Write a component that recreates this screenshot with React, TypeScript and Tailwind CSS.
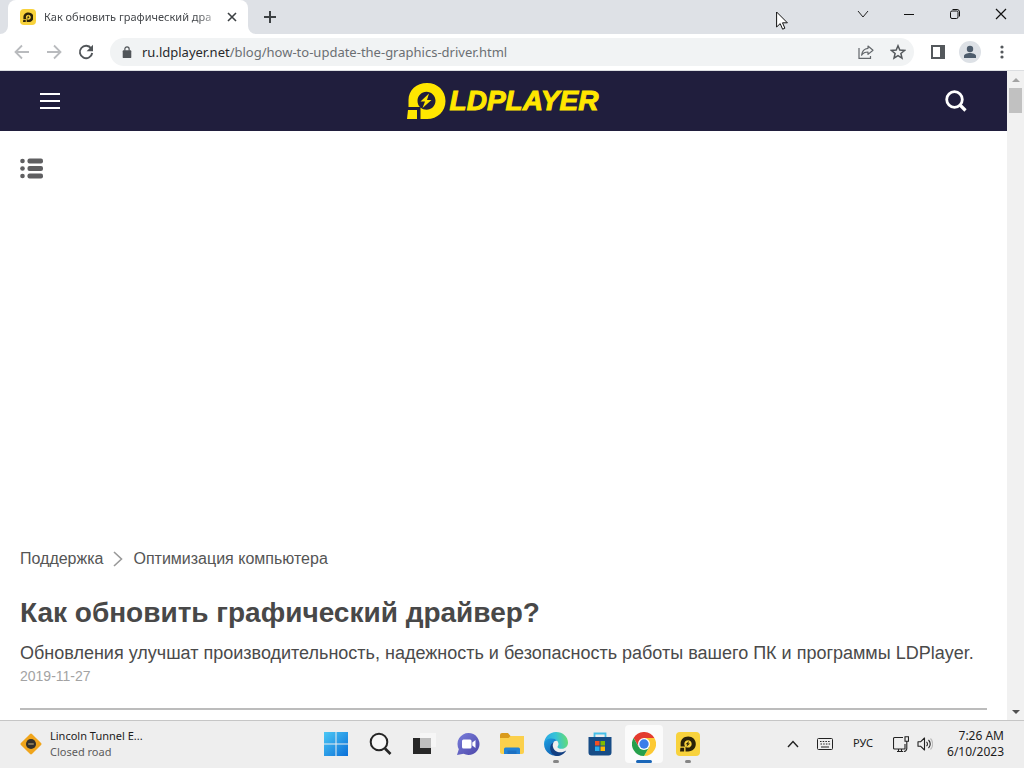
import type React from "react";
import { useState } from "react";

const PAGE_URL = {
  host: "ru.ldplayer.net",
  path: "/blog/how-to-update-the-graphics-driver.html",
};

const ARTICLE = {
  title: "Как обновить графический драйвер?",
  summary:
    "Обновления улучшат производительность, надежность и безопасность работы вашего ПК и программы LDPlayer.",
  date: "2019-11-27",
};

type IconButtonProps = {
  label: string;
  className?: string;
  children: React.ReactNode;
};

const IconButton: React.FC<IconButtonProps> = ({
  label,
  className = "",
  children,
}) => (
  <button
    type="button"
    aria-label={label}
    className={`flex shrink-0 items-center justify-center ${className}`}
  >
    {children}
  </button>
);

const LdMark: React.FC<{ className?: string }> = ({ className }) => (
  <svg viewBox="0 0 39 36" className={className} fill="currentColor" aria-hidden="true">
    <path
      fillRule="evenodd"
      d="M1.500 24V17C1.500 7 9.500 0 20 0c10.500 0 18.500 7.500 18.500 18s-8 18-18.500 18h-6.500V24.500c1.800 1.500 3.800 2.200 6 2.200 5 0 9-4 9-9s-4-9-9-9-9 4-9 9c0 2.400.8 4.600 2.400 6.300z"
    />
    <path d="M1 27h9v9H0z" />
    <path d="M22 10.500 13.500 18.500H18L15.500 25l9-8H20z" />
  </svg>
);

const LdAppIcon: React.FC<{ className?: string }> = ({ className }) => (
  <span
    className={`flex shrink-0 items-center justify-center bg-[#f8d23c] text-[#2a2108] ${className}`}
  >
    <LdMark className="h-2/3 w-2/3" />
  </span>
);

const TabStrip = () => (
  <div className="flex h-[34px] shrink-0 items-stretch bg-[#dee1e6] pl-2">
    <div className="relative flex w-60 items-center rounded-t-lg bg-white pl-3 pr-2">
      <svg viewBox="0 0 8 8" className="absolute -left-2 bottom-0 size-2" fill="#fff" aria-hidden="true">
        <path d="M8 0v8H0a8 8 0 0 0 8-8z" />
      </svg>
      <svg viewBox="0 0 8 8" className="absolute -right-2 bottom-0 size-2" fill="#fff" aria-hidden="true">
        <path d="M0 0v8h8a8 8 0 0 1-8-8z" />
      </svg>
      <LdAppIcon className="size-4 rounded-sm" />
      <span className="ml-2 min-w-0 flex-1 whitespace-nowrap text-[11px] text-[#45484c] [mask-image:linear-gradient(to_right,black_85%,transparent)]">
        Как обновить графический дра
      </span>
      <IconButton label="Закрыть вкладку" className="size-4">
        <svg viewBox="0 0 16 16" className="size-4" fill="none" stroke="#3c4043" strokeWidth="1.600" aria-hidden="true">
          <path d="M4 4l8 8M12 4l-8 8" />
        </svg>
      </IconButton>
    </div>
    <IconButton label="Новая вкладка" className="ml-2 w-7">
      <svg viewBox="0 0 14 14" className="size-3.5" fill="none" stroke="#3c4043" strokeWidth="2" aria-hidden="true">
        <path d="M7 1v12M1 7h12" />
      </svg>
    </IconButton>
    <div className="ml-auto flex h-7 items-stretch">
      <IconButton label="Поиск вкладок" className="w-[46px]">
        <svg viewBox="0 0 12 12" className="size-3" fill="none" stroke="#222" aria-hidden="true">
          <path d="M1 3l5 6 5-6" />
        </svg>
      </IconButton>
      <IconButton label="Свернуть" className="w-[46px]">
        <svg viewBox="0 0 12 12" className="size-3" fill="none" stroke="#111" aria-hidden="true">
          <path d="M1 6.500h10" />
        </svg>
      </IconButton>
      <IconButton label="Восстановить" className="w-[46px]">
        <svg viewBox="0 0 12 12" className="size-3" fill="none" stroke="#111" aria-hidden="true">
          <rect x="1.500" y="3" width="7.500" height="7.500" rx="1.500" />
          <path d="M3.500 1.500H8a2.500 2.500 0 0 1 2.500 2.500v4.500" />
        </svg>
      </IconButton>
      <IconButton label="Закрыть" className="w-[46px]">
        <svg viewBox="0 0 12 12" className="size-3" fill="none" stroke="#111" strokeWidth="1.200" aria-hidden="true">
          <path d="M1 1l10 10M11 1L1 11" />
        </svg>
      </IconButton>
    </div>
  </div>
);

const Toolbar = () => (
  <div className="flex h-[37px] shrink-0 items-center border-b border-[#dcdee1] bg-white px-1.5">
    <IconButton label="Назад" className="size-8">
      <svg viewBox="0 0 16 16" className="size-4" fill="none" stroke="#b9bbbe" strokeWidth="1.800" aria-hidden="true">
        <path d="M15 8H2M8 1.500L1.500 8 8 14.500" />
      </svg>
    </IconButton>
    <IconButton label="Вперёд" className="size-8">
      <svg viewBox="0 0 16 16" className="size-4" fill="none" stroke="#b9bbbe" strokeWidth="1.800" aria-hidden="true">
        <path d="M1 8h13M8 1.500L14.500 8 8 14.500" />
      </svg>
    </IconButton>
    <IconButton label="Обновить" className="size-8">
      <svg viewBox="0 0 16 16" className="size-4" aria-hidden="true">
        <path d="M13.200 4.500A6.200 6.200 0 1 0 14.200 9" fill="none" stroke="#515559" strokeWidth="1.900" />
        <path d="M15 .8v6.400H8.600z" fill="#515559" />
      </svg>
    </IconButton>
    <div className="mx-2 flex h-7 min-w-0 flex-1 items-center rounded-full bg-[#f1f3f4] pl-3">
      <svg viewBox="0 0 10 14" className="h-3 w-2.5 shrink-0" aria-hidden="true">
        <rect y="5" width="10" height="9" rx="1" fill="#515559" />
        <path d="M2.500 5.500V3.500a2.500 2.500 0 0 1 5 0v2" fill="none" stroke="#515559" strokeWidth="1.400" />
      </svg>
      <button type="button" aria-label="Адрес страницы" className="ml-2.5 min-w-0 flex-1 truncate text-left text-[13px] leading-5 text-[#6b6f73]">
        <span className="text-[#27292c]">{PAGE_URL.host}</span>
        {PAGE_URL.path}
      </button>
      <IconButton label="Поделиться" className="size-8">
        <svg viewBox="0 0 16 16" className="size-4" fill="none" stroke="#63676b" strokeWidth="1.200" aria-hidden="true">
          <path d="M1 4v10.400h11.500V12" />
          <path d="M10 2l5 4.200-5 4.200V8C7 8 5 9 3.600 11.200 4 7.500 6 4.700 10 4.300z" strokeLinejoin="round" />
        </svg>
      </IconButton>
      <IconButton label="Добавить в закладки" className="size-8">
        <svg viewBox="0 0 16 16" className="size-4" fill="none" stroke="#54585c" strokeWidth="1.500" aria-hidden="true">
          <path d="M8 1.800l1.800 4.300 4.700.4-3.600 3 1.100 4.600L8 11.700l-4 2.400 1.100-4.600-3.600-3 4.700-.4z" />
        </svg>
      </IconButton>
    </div>
    <IconButton label="Боковая панель" className="size-8">
      <svg viewBox="0 0 14 14" className="size-3.5" aria-hidden="true">
        <path d="M0 0h14v14H0zM2 2v10h7V2z" fill="#54585c" fillRule="evenodd" />
      </svg>
    </IconButton>
    <IconButton label="Профиль" className="size-8">
      <span className="flex size-[22px] items-center justify-center rounded-full bg-[#dde1e6]">
        <svg viewBox="0 0 14 14" className="size-3.5" fill="#4d5c6c" aria-hidden="true">
          <circle cx="7" cy="4" r="3.200" />
          <path d="M1 13v-2c0-2 3.500-3 6-3s6 1 6 3v2z" />
        </svg>
      </span>
    </IconButton>
    <IconButton label="Меню браузера" className="size-8">
      <svg viewBox="0 0 4 14" className="h-3.5 w-1" fill="#54585c" aria-hidden="true">
        <circle cx="2" cy="2" r="1.600" />
        <circle cx="2" cy="7" r="1.600" />
        <circle cx="2" cy="12" r="1.600" />
      </svg>
    </IconButton>
  </div>
);

const SiteHeader = () => (
  <header className="flex h-15 items-center justify-between bg-[#201e3d] px-10">
    <IconButton label="Меню">
      <svg viewBox="0 0 20 16" className="h-4 w-5" fill="#fff" aria-hidden="true">
        <path d="M0 0h20v2H0zM0 7h20v2H0zM0 14h20v2H0z" />
      </svg>
    </IconButton>
    <a href="#home" className="flex items-center gap-1 text-[#ffe600]">
      <LdMark className="h-9 w-[39px]" />
      <span className="text-[28px] font-bold italic leading-9 [-webkit-text-stroke:1px_#ffe600]">
        LDPLAYER
      </span>
    </a>
    <IconButton label="Поиск">
      <svg viewBox="0 0 22 22" className="size-[22px]" fill="none" stroke="#fff" aria-hidden="true">
        <circle cx="9.500" cy="9.500" r="7.800" strokeWidth="2.800" />
        <path d="M15 15l5.500 5.500" strokeWidth="3.200" />
      </svg>
    </IconButton>
  </header>
);

const Article = () => (
  <article className="px-5 pt-[26px]">
    <IconButton label="Содержание">
      <svg viewBox="0 0 23 22" className="h-[22px] w-[23px]" fill="#5f5f61" aria-hidden="true">
        <circle cx="2.500" cy="4" r="2.300" />
        <circle cx="2.500" cy="11.500" r="2.300" />
        <circle cx="2.500" cy="19" r="2.300" />
        <rect x="7.500" y="1.500" width="15.500" height="5" rx="2" />
        <rect x="7.500" y="9" width="15.500" height="5" rx="2" />
        <rect x="7.500" y="16.500" width="15.500" height="5" rx="2" />
      </svg>
    </IconButton>
    <div className="h-[368px]" />
    <nav className="flex items-center text-base text-[#555]">
      <a href="#support">Поддержка</a>
      <svg viewBox="0 0 10 16" className="mx-2.5 h-4 w-2.5" fill="none" stroke="#999" strokeWidth="1.600" aria-hidden="true">
        <path d="M1 1l7.500 7L1 15" />
      </svg>
      <a href="#optimization">Оптимизация компьютера</a>
    </nav>
    <h1 className="mt-6 text-[28px] font-bold leading-9 text-[#484848]">
      {ARTICLE.title}
    </h1>
    <p className="mt-2.5 text-lg leading-6 text-[#4a4a4a]">{ARTICLE.summary}</p>
    <time dateTime={ARTICLE.date} className="block text-sm leading-[22px] text-[#a3a3a3]">
      {ARTICLE.date}
    </time>
    <hr className="mt-[21px] border-t-2 border-[#bcbcbc]" />
  </article>
);

const Scrollbar = () => (
  <div className="flex w-[17px] shrink-0 flex-col items-center bg-[#f1f1f1]">
    <div className="flex h-[17px] items-center">
      <svg viewBox="0 0 8 4" className="h-1 w-2" fill="#a3a3a3" aria-hidden="true">
        <path d="M0 4l4-4 4 4z" />
      </svg>
    </div>
    <div className="h-[25px] w-[13px] bg-[#c1c1c1]" />
    <div className="mt-auto flex h-[17px] items-center">
      <svg viewBox="0 0 8 4" className="h-1 w-2" fill="#505050" aria-hidden="true">
        <path d="M0 0l4 4 4-4z" />
      </svg>
    </div>
  </div>
);

const TASKBAR_APPS = [
  {
    name: "Start",
    icon: (
      <svg viewBox="0 0 24 24" className="size-6" aria-hidden="true">
        <defs>
          <linearGradient id="win" x1="0" y1="0" x2="1" y2="1">
            <stop offset="0" stopColor="#4cc8f5" />
            <stop offset="1" stopColor="#0a6fd8" />
          </linearGradient>
        </defs>
        <path fill="url(#win)" d="M0 0h11.500v11.500H0zM12.500 0H24v11.500H12.500zM0 12.500h11.500V24H0zM12.500 12.500H24V24H12.500z" />
      </svg>
    ),
  },
  {
    name: "Search",
    icon: (
      <svg viewBox="0 0 24 24" className="size-6" fill="none" stroke="#252525" aria-hidden="true">
        <circle cx="11" cy="10" r="8.300" strokeWidth="2" fill="#f7f7f7" />
        <path d="M17 16.500l5.500 5.500" strokeWidth="2.600" />
      </svg>
    ),
  },
  {
    name: "Task view",
    icon: (
      <svg viewBox="0 0 24 24" className="size-6" aria-hidden="true">
        <rect x="8" y="1" width="16" height="14" fill="#f6f6f6" />
        <path d="M1 6h18v16H1z" fill="#272727" />
        <path d="M8 6h11v10H8z" fill="#bdbdbd" />
      </svg>
    ),
  },
  {
    name: "Chat",
    icon: (
      <svg viewBox="0 0 24 24" className="size-6" aria-hidden="true">
        <defs>
          <linearGradient id="chat" x1="0" y1="0" x2="1" y2="1">
            <stop offset="0" stopColor="#7a7fdc" />
            <stop offset="1" stopColor="#4c46a8" />
          </linearGradient>
        </defs>
        <path fill="url(#chat)" d="M12.500 1a11 11 0 1 1-5 20.800L1 23l1.800-5.800A11 11 0 0 1 12.500 1z" />
        <rect x="6" y="7.500" width="9.500" height="9" rx="1.500" fill="#fff" />
        <path d="M16.300 10.500l3.200-2.500v8l-3.200-2.500z" fill="#fff" />
      </svg>
    ),
  },
  {
    name: "File Explorer",
    icon: (
      <svg viewBox="0 0 24 24" className="size-6" aria-hidden="true">
        <path d="M0 3a2 2 0 0 1 2-2h6l2.500 3H22a2 2 0 0 1 2 2v14H0z" fill="#d99a1c" />
        <path d="M0 6h8.500l2-2H24v16a2 2 0 0 1-2 2H2a2 2 0 0 1-2-2z" fill="#fbd04c" />
        <path d="M4 22v-5a1.500 1.500 0 0 1 1.500-1.500h13A1.500 1.500 0 0 1 20 17v5z" fill="#2382d4" />
        <path d="M7.500 18.500h9V22h-9z" fill="#1c70c2" />
      </svg>
    ),
  },
  {
    name: "Edge",
    running: true,
    icon: (
      <svg viewBox="0 0 24 24" className="size-6" aria-hidden="true">
        <defs>
          <linearGradient id="edge-top" x1="0" y1="0.500" x2="1" y2="0.400">
            <stop offset="0" stopColor="#2aa6e4" />
            <stop offset="0.500" stopColor="#35c3d8" />
            <stop offset="1" stopColor="#66dc72" />
          </linearGradient>
          <linearGradient id="edge-side" x1="0" y1="0" x2="0.800" y2="1">
            <stop offset="0" stopColor="#1ba0e2" />
            <stop offset="1" stopColor="#1258ab" />
          </linearGradient>
        </defs>
        <path fill="url(#edge-top)" d="M0 11.500C.5 5 5.500 0 12 0c7 0 12 5 12 10.500 0 4-3 6.300-6.500 6.300-2.500 0-4-.8-4-1.800 0-.8 1-1.200 1-3C14.500 9 11.500 7 8 7c-3.500 0-6.500 1.800-8 4.500z" />
        <path fill="url(#edge-side)" d="M0 12c.5-3.500 3.500-5.500 7.500-5.500 2.500 0 4.500.9 5.500 2-3 0-5 3-5 6 0 5 4 9 9 8.300A12 12 0 0 1 0 12z" />
        <path fill="#123f82" d="M9.800 10.200c-1 1.300-1.300 3-.8 4.800C10 19 14 21 18 20.200c1.500-.3 3-1 4.200-1.800-1.800 3.500-5.500 5.600-9.700 5.600C8 23 6.200 19.500 6.200 16c0-2.500 1.300-4.800 3.600-5.800z" />
      </svg>
    ),
  },
  {
    name: "Microsoft Store",
    icon: (
      <svg viewBox="0 0 24 24" className="size-6" aria-hidden="true">
        <path d="M6.500 6V1.500h11V6" fill="none" stroke="#45c0ea" strokeWidth="1.800" />
        <path d="M.5 5h23v15.500a3 3 0 0 1-3 3h-17a3 3 0 0 1-3-3z" fill="#174c86" />
        <path d="M7 9h4.500v4.500H7z" fill="#f25022" />
        <path d="M12.500 9H17v4.500h-4.500z" fill="#7fba00" />
        <path d="M7 14.500h4.500V19H7z" fill="#27aef0" />
        <path d="M12.500 14.500H17V19h-4.500z" fill="#ffb900" />
      </svg>
    ),
  },
  {
    name: "Chrome",
    active: true,
    icon: (
      <svg viewBox="0 0 24 24" className="size-6" aria-hidden="true">
        <path d="M22.400 6A12 12 0 0 1 12 24l5.200-9L12 6z" fill="#fcc934" />
        <path d="M1.600 6L6.800 15 12 12V6h10.400A12 12 0 0 0 1.600 6z" fill="#e33b2e" />
        <path d="M1.600 6A12 12 0 0 0 12 24l5.200-9H6.800z" fill="#26a04b" />
        <circle cx="12" cy="12" r="6" fill="#fff" />
        <circle cx="12" cy="12" r="4.700" fill="#3b7de9" />
      </svg>
    ),
  },
  {
    name: "LDPlayer",
    running: true,
    icon: <LdAppIcon className="size-6 rounded-sm" />,
  },
];

const Taskbar = () => (
  <footer className="relative flex h-12 shrink-0 items-center justify-between border-t border-[#c6c6c6] bg-[#eeeeee] pb-0.5 text-[#1c1c1c]">
    <button type="button" className="flex items-center gap-2 pl-5 text-left text-[11px] leading-4">
      <svg viewBox="0 0 24 24" className="size-[22px]" aria-hidden="true">
        <rect x="3.500" y="3.500" width="17" height="17" rx="1.500" transform="rotate(45 12 12)" fill="#f0a51c" />
        <circle cx="12" cy="12" r="5.500" fill="#33302b" />
        <path d="M9 11h6v2H9z" fill="#8a7b58" />
      </svg>
      <span>
        <span className="block">Lincoln Tunnel E...</span>
        <span className="block text-[#5c5c5c]">Closed road</span>
      </span>
    </button>
    <div className="absolute inset-y-0 left-1/2 flex -translate-x-1/2 items-center gap-1.5 pb-0.5">
      {TASKBAR_APPS.map((app) => (
        <button
          key={app.name}
          type="button"
          aria-label={app.name}
          className={`relative flex size-[38px] items-center justify-center rounded ${
            app.active ? "bg-[#fbfbfb]" : ""
          }`}
        >
          {app.icon}
          {app.running && (
            <span className="absolute bottom-0 h-[3px] w-1.5 rounded-full bg-[#858585]" />
          )}
          {app.active && (
            <span className="absolute bottom-0 h-[3px] w-4 rounded-full bg-[#1a66b8]" />
          )}
        </button>
      ))}
    </div>
    <div className="flex items-center pr-5 text-[11px]">
      <IconButton label="Show hidden icons" className="w-8">
        <svg viewBox="0 0 12 8" className="h-2 w-3" fill="none" stroke="#222" strokeWidth="1.400" aria-hidden="true">
          <path d="M1 7l5-5.500L11 7" />
        </svg>
      </IconButton>
      <IconButton label="Touch keyboard" className="w-8">
        <svg viewBox="0 0 16 12" className="h-3 w-4" fill="none" stroke="#222" aria-hidden="true">
          <rect x=".5" y=".5" width="15" height="11" rx="1" />
          <path d="M3 3.500h10M3.500 6h10" strokeDasharray="1.500 1.200" />
          <path d="M4 9h8" />
        </svg>
      </IconButton>
      <button type="button" className="w-11">РУС</button>
      <button type="button" aria-label="Network and volume" className="flex items-center gap-2 px-2">
        <svg viewBox="0 0 16 16" className="size-4" fill="none" stroke="#222" strokeWidth="1.100" aria-hidden="true">
          <path d="M10 1.500H1.500A1 1 0 0 0 .5 2.500V12a1 1 0 0 0 1 1H12V8M4 15.500h6M5.500 13v2.500M8.500 13v2.500" />
          <path d="M12 .8h3.500v4.500H12zM13.800 5.300v7.200a3 3 0 0 1-3 3" />
        </svg>
        <svg viewBox="0 0 16 14" className="h-3.5 w-4" fill="none" stroke="#222" strokeWidth="1.100" aria-hidden="true">
          <path d="M1 4.800h2.500L7.500 1v12L3.500 9.200H1z" strokeLinejoin="round" />
          <path d="M9.500 4.800a3 3 0 0 1 0 4.400M11.500 3a5.500 5.500 0 0 1 0 8" />
          <path d="M13.500 1.500a8 8 0 0 1 0 11" stroke="#bbb" />
        </svg>
      </button>
      <button type="button" className="ml-1.5 text-right text-xs leading-4">
        <span className="block">7:26 AM</span>
        <span className="block">6/10/2023</span>
      </button>
    </div>
  </footer>
);

const App: React.FC = () => {
  const [pointer] = useState({ x: 776, y: 11 });

  return (
    <div className="relative flex h-screen flex-col overflow-hidden bg-white font-['Noto_Sans',sans-serif]">
      <TabStrip />
      <Toolbar />
      <div className="flex min-h-0 flex-1">
        <main className="min-w-0 flex-1 overflow-hidden font-['Liberation_Sans',Arial,sans-serif]">
          <SiteHeader />
          <Article />
        </main>
        <Scrollbar />
      </div>
      <Taskbar />
      <svg
        viewBox="0 0 12 19"
        className="pointer-events-none absolute h-[19px] w-3"
        style={{ left: pointer.x, top: pointer.y }}
        fill="#fff"
        stroke="#111"
        aria-hidden="true"
      >
        <path d="M.6 1v15l3.600-3.400 2.400 5.600 2.300-1-2.400-5.400h4.900z" />
      </svg>
    </div>
  );
};

export default App;
